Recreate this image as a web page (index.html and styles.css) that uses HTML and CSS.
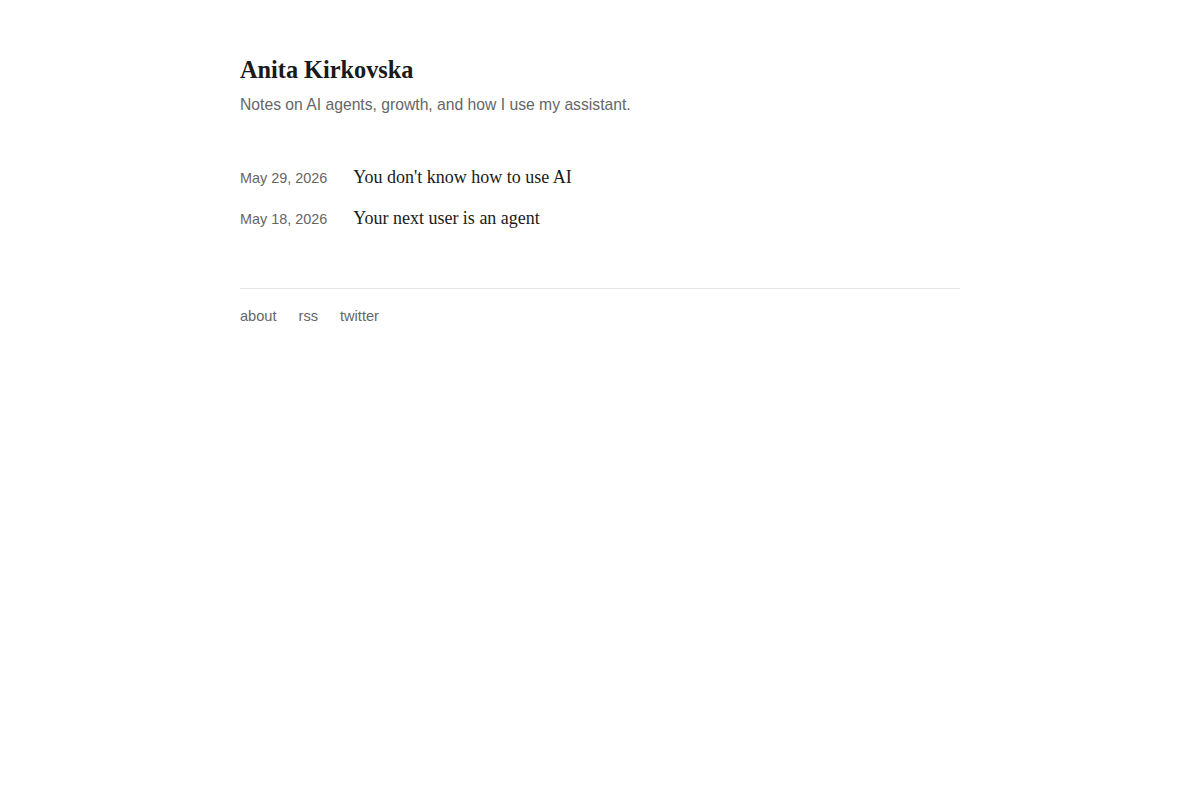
FILE: index.html
```html
<!DOCTYPE html>
<html lang="en">
<head>
<meta charset="utf-8">
<title>Anita Kirkovska</title>
<link rel="stylesheet" href="styles.css">
</head>
<body>
<div class="page">
  <header class="header">
    <h1 class="site-title">Anita Kirkovska</h1>
    <p class="tagline">Notes on AI agents, growth, and how I use my assistant.</p>
  </header>
  <ul class="posts">
    <li class="post"><span class="date">May 29, 2026</span><a class="post-title" href="#">You don't know how to use AI</a></li>
    <li class="post"><span class="date">May 18, 2026</span><a class="post-title" href="#">Your next user is an agent</a></li>
  </ul>
  <footer class="footer">
    <a href="#">about</a>
    <a href="#">rss</a>
    <a href="#">twitter</a>
  </footer>
</div>
</body>
</html>
```
FILE: styles.css
```css
html, body {
  margin: 0;
  padding: 0;
  background: #fff;
}
body {
  font-family: "Liberation Sans", Arial, sans-serif;
  color: #1a1a1a;
}
.page {
  width: 720px;
  margin: 0 auto;
  padding-top: 55px;
}
.header {
  margin-bottom: 48px;
}
.site-title {
  font-family: "Liberation Serif", "Times New Roman", serif;
  font-size: 24.3px;
  font-weight: bold;
  line-height: 30px;
  margin: 0 0 9px 0;
  color: #1a1a1a;
}
.tagline {
  margin: 0;
  font-size: 15.7px;
  line-height: 22px;
  color: #666;
}
.posts {
  list-style: none;
  margin: 0;
  padding: 0;
  display: flex;
  flex-direction: column;
  gap: 13px;
}
.post {
  display: flex;
  align-items: baseline;
  gap: 26px;
  line-height: 27px;
}
.date {
  font-size: 14.4px;
  color: #666;
}
.post-title {
  font-family: "Liberation Serif", "Times New Roman", serif;
  font-size: 18px;
  color: #1a1a1a;
  text-decoration: none;
}
.footer {
  margin-top: 55px;
  border-top: 1px solid #e5e5e5;
  padding-top: 17px;
  display: flex;
  gap: 22px;
  font-size: 14.6px;
  line-height: 20px;
}
.footer a {
  color: #666;
  text-decoration: none;
}
```
